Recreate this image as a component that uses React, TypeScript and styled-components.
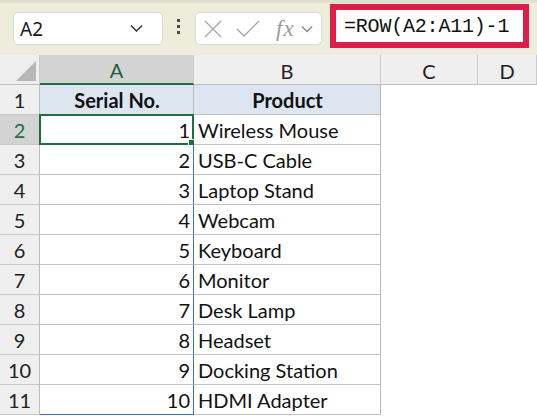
import React from 'react'
import styled, { createGlobalStyle } from 'styled-components'

const GlobalStyle = createGlobalStyle`
  html, body { margin: 0; padding: 0; background: #ffffff; }
  body { font-family: "Lato", "Liberation Sans", sans-serif; }
`

const Page = styled.div`
  width: 537px;
  height: 416px;
  overflow: hidden;
  background: #ffffff;
`

const Toolbar = styled.div`
  height: 52px;
  border-top: 3px solid #e3e1ce;
  background: #eeecdb;
  display: flex;
  align-items: flex-start;
  padding-left: 13px;
`

const NameBox = styled.div`
  margin-top: 9px;
  width: 150px;
  height: 33px;
  box-sizing: border-box;
  background: #ffffff;
  border: 1px solid #dcdcd6;
  border-radius: 5px;
  display: flex;
  align-items: center;
  justify-content: space-between;
  padding: 0 19px 0 6px;
  font-family: "Noto Sans", "Liberation Sans", sans-serif;
  font-size: 19px;
  color: #1a1a1a;
`

const Dots = styled.div`
  margin: 16px 0 0 14px;
  width: 3px;
  display: flex;
  flex-direction: column;
  gap: 3px;
  span {
    display: block;
    width: 3px;
    height: 3px;
    background: #4a4a4a;
  }
`

const FxBox = styled.div`
  margin: 9px 0 0 15px;
  width: 127px;
  height: 33px;
  box-sizing: border-box;
  background: #ffffff;
  border: 1px solid #dcdcd6;
  border-radius: 5px;
  display: flex;
  align-items: center;
  padding-left: 8px;
  gap: 14px;
  color: #a6a6a6;
`

const FxLabel = styled.span`
  font-family: "Liberation Serif", "DejaVu Serif", serif;
  font-style: italic;
  font-size: 23px;
  color: #9a9a9a;
  margin-left: 2px;
  margin-right: -8px;
  letter-spacing: 1px;
`

const FormulaBox = styled.div`
  margin: 1px 0 0 8px;
  width: 199px;
  height: 44px;
  box-sizing: border-box;
  background: #ffffff;
  border: 6px solid #e01c4b;
  display: flex;
  align-items: center;
  padding-left: 8px;
  font-family: "Liberation Mono", "DejaVu Sans Mono", monospace;
  font-size: 20px;
  color: #111111;
  letter-spacing: -0.2px;
`

const Sheet = styled.div`
  display: grid;
  grid-template-columns: 40px 154px 187px 97px 59px;
  grid-auto-rows: 30px;
`

const Head = styled.div<{ $selected?: boolean }>`
  box-sizing: border-box;
  background: ${p => (p.$selected ? '#d3d3d3' : '#efefef')};
  border-right: 1px solid #cacaca;
  border-bottom: ${p => (p.$selected ? '2px solid #1e6e42' : '1px solid #bdbdbd')};
  display: flex;
  align-items: center;
  justify-content: center;
  font-size: 20px;
  color: ${p => (p.$selected ? '#1e5a3a' : '#222222')};
  padding-top: 2px;
`

const Corner = styled.div`
  box-sizing: border-box;
  background: #efefef;
  border-right: 1px solid #cacaca;
  border-bottom: 1px solid #bdbdbd;
  position: relative;
  &::after {
    content: '';
    position: absolute;
    right: 3px;
    bottom: 3px;
    width: 0;
    height: 0;
    border-left: 20px solid transparent;
    border-bottom: 20px solid #b7b7b7;
  }
`

const RowHead = styled.div<{ $selected?: boolean }>`
  box-sizing: border-box;
  background: ${p => (p.$selected ? '#d3d3d3' : '#efefef')};
  border-right: 1px solid #bdbdbd;
  border-bottom: 1px solid #c6c6c6;
  display: flex;
  align-items: center;
  justify-content: center;
  font-size: 20px;
  color: ${p => (p.$selected ? '#1e6e42' : '#222222')};
`

const Cell = styled.div<{ $align?: 'left' | 'right' | 'center'; $title?: boolean; $range?: boolean; $last?: boolean }>`
  box-sizing: border-box;
  position: relative;
  background: ${p => (p.$title ? '#dde6f0' : '#ffffff')};
  border-right: 1px solid ${p => (p.$range ? '#3f6fc4' : '#b9b9b9')};
  border-bottom: 1px solid ${p => (p.$range && p.$last ? '#3f6fc4' : '#c2c2c2')};
  display: flex;
  align-items: center;
  justify-content: ${p => (p.$align === 'right' ? 'flex-end' : p.$align === 'center' ? 'center' : 'flex-start')};
  padding: 0 3px 0 4px;
  font-size: 20px;
  font-weight: ${p => (p.$title ? 700 : 400)};
  color: #111111;
  white-space: nowrap;
`

const Blank = styled.div`
  background: #ffffff;
`

const Selection = styled.div`
  position: absolute;
  left: -1px;
  top: -1px;
  right: -1px;
  bottom: -1px;
  border: 2px solid #1e6e42;
  pointer-events: none;
  &::after {
    content: '';
    position: absolute;
    right: -5px;
    bottom: -5px;
    width: 7px;
    height: 7px;
    background: #1e6e42;
    border: 1px solid #ffffff;
  }
`

const products = [
  'Wireless Mouse',
  'USB-C Cable',
  'Laptop Stand',
  'Webcam',
  'Keyboard',
  'Monitor',
  'Desk Lamp',
  'Headset',
  'Docking Station',
  'HDMI Adapter',
]

const Chevron = ({ color, size }: { color: string; size: number }) => (
  <svg width={size} height={size / 2 + 2} viewBox="0 0 14 8">
    <polyline points="1,1 7,7 13,1" fill="none" stroke={color} strokeWidth="1.6" />
  </svg>
)

const App = () => {
  return (
    <Page>
      <GlobalStyle />
      <Toolbar>
        <NameBox>
          <span>A2</span>
          <Chevron color="#333333" size={13} />
        </NameBox>
        <Dots>
          <span />
          <span />
          <span />
        </Dots>
        <FxBox>
          <svg width="18" height="18" viewBox="0 0 18 18">
            <path d="M1 1 L17 17 M17 1 L1 17" stroke="#a8a8a8" strokeWidth="1.4" fill="none" />
          </svg>
          <svg width="24" height="18" viewBox="0 0 24 18">
            <polyline points="1,9 8,16 23,1" stroke="#a8a8a8" strokeWidth="1.4" fill="none" />
          </svg>
          <FxLabel>fx</FxLabel>
          <Chevron color="#8a8a8a" size={12} />
        </FxBox>
        <FormulaBox>=ROW(A2:A11)-1</FormulaBox>
      </Toolbar>
      <Sheet>
        <Corner />
        <Head $selected>A</Head>
        <Head>B</Head>
        <Head>C</Head>
        <Head>D</Head>

        <RowHead>1</RowHead>
        <Cell $title $align="center">Serial No.</Cell>
        <Cell $title $align="center">Product</Cell>
        <Blank />
        <Blank />

        {products.map((name, i) => (
          <React.Fragment key={name}>
            <RowHead $selected={i === 0}>{i + 2}</RowHead>
            <Cell $align="right" $range $last={i === products.length - 1}>
              {i + 1}
              {i === 0 && <Selection />}
            </Cell>
            <Cell>{name}</Cell>
            <Blank />
            <Blank />
          </React.Fragment>
        ))}
      </Sheet>
    </Page>
  )
}

export default App
